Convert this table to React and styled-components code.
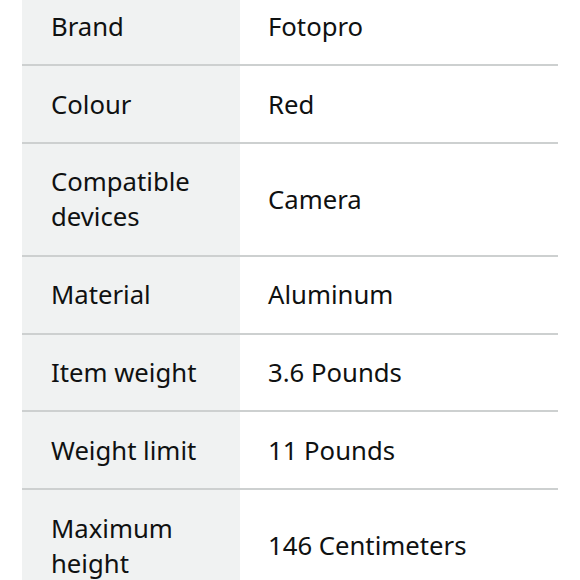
import React from "react";
import styled, { createGlobalStyle } from "styled-components";

const specs = [
  { label: "Brand", value: "Fotopro" },
  { label: "Colour", value: "Red" },
  { label: "Compatible devices", value: "Camera" },
  { label: "Material", value: "Aluminum" },
  { label: "Item weight", value: "3.6 Pounds" },
  { label: "Weight limit", value: "11 Pounds" },
  { label: "Maximum height", value: "146 Centimeters" },
];

const GlobalStyle = createGlobalStyle`
  html, body {
    margin: 0;
    padding: 0;
    background: #fff;
    overflow: hidden;
  }
  body {
    font-family: "Noto Sans", "Open Sans", sans-serif;
    color: #0f1111;
  }
`;

const App = () => {
  return (
    <>
      <GlobalStyle />
      <Page>
        <Table>
          {specs.map((row) => (
            <Row key={row.label}>
              <Label>{row.label}</Label>
              <Value>{row.value}</Value>
            </Row>
          ))}
        </Table>
      </Page>
    </>
  );
};

export default App;

const Page = styled.div`
  width: 580px;
  height: 580px;
  overflow: hidden;
  padding: 0 22px;
  box-sizing: border-box;
`;

const Table = styled.div`
  margin-top: -11.5px;
  display: flex;
  flex-direction: column;
`;

const Row = styled.div`
  display: grid;
  grid-template-columns: 218px 1fr;
  border-bottom: 2px solid #cdd0d0;
`;

const Label = styled.div`
  background: #f0f2f2;
  padding: 20.4px 20px 20.4px 29px;
  font-size: 25.7px;
  line-height: 35px;
  max-width: 169px;
`;

const Value = styled.div`
  display: flex;
  align-items: center;
  padding: 0 20px 0 28px;
  font-size: 25.7px;
  line-height: 35px;
`;
